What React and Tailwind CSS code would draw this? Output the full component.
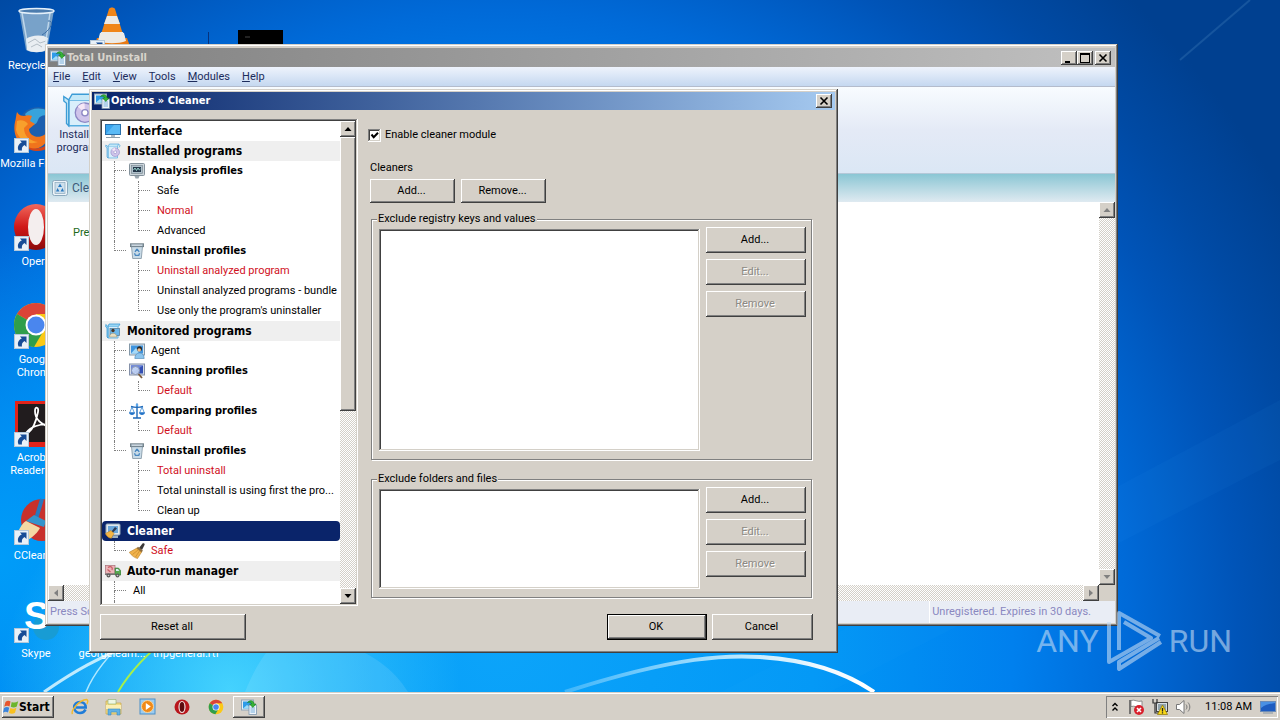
import React, { useState } from 'react';
import clsx from 'clsx';

const RAISED = 'bg-[#d5d0c8] shadow-[inset_-1px_-1px_#404040,inset_1px_1px_#fff,inset_-2px_-2px_#808080]';
const SUNKEN = 'shadow-[inset_-1px_-1px_#fff,inset_1px_1px_#808080,inset_-2px_-2px_#d4d0c8,inset_2px_2px_#404040]';
const WINDOW = 'bg-[#d5d0c8] shadow-[inset_-1px_-1px_#404040,inset_1px_1px_#d4d0c8,inset_-2px_-2px_#808080,inset_2px_2px_#fff]';
const TRACK = 'bg-[repeating-conic-gradient(#fff_0_25%,#d4d0c8_0_50%)] bg-[length:2px_2px]';
const BOLD = "font-bold font-['DejaVu_Sans_Condensed','DejaVu_Sans',sans-serif]";

/* ---------- icons ---------- */

function AppIcon({ className = 'size-4' }) {
  return (
    <svg viewBox="0 0 16 16" className={className}>
      <rect x="0.5" y="1" width="12" height="10" fill="#e8eef4" stroke="#8fa4b8" />
      <rect x="2" y="2.500" width="9" height="7" fill="#2f9be8" />
      <path d="M2 9.500 6 6l5 3.500z" fill="#9fdcf6" />
      <rect x="8" y="6" width="7.500" height="9.500" fill="#eef4fa" stroke="#7d95ad" strokeWidth=".8" />
      <path d="M9.500 9h4.500M9.500 11h4.500M9.500 13h4.500" stroke="#6aa7d8" strokeWidth=".9" />
      <path d="M6.500 3.500C9 .5 13 1.500 13 5h2l-3.200 3.500L8.700 5h1.800C10.500 3.300 8.500 2.800 6.500 3.500z" fill="#35b335" stroke="#157a1c" strokeWidth=".6" />
    </svg>
  );
}

function MonitorIcon() {
  return (
    <svg viewBox="0 0 16 16" className="size-4">
      <rect x="0" y="1" width="16" height="11" fill="#2b6fa8" />
      <rect x="1" y="2" width="14" height="9" fill="#38a4ee" />
      <path d="M1 11 9 2h6v9z" fill="#5abaf6" />
      <path d="M6 12h4v2H6z" fill="#aebcc6" />
      <path d="M1 14.500h14" stroke="#8fa0ac" />
    </svg>
  );
}

function BoxIcon({ className = 'size-4' }) {
  return (
    <svg viewBox="0 0 16 16" className={className}>
      <path d="M3 3.500h9.500V15H3z" fill="#d9effb" stroke="#56aee0" strokeWidth=".7" />
      <path d="M.8 2 3 3.500V15l-1-1V5L.8 4zM3 3.500 4.500 1h9l-1 2.500M13.500 1l1.700 1.500-1.200 2" fill="#c4e8f8" stroke="#3c9cd6" strokeWidth=".6" />
      <circle cx="10.200" cy="9.200" r="4.300" fill="#cfc4ea" stroke="#8d88c4" strokeWidth=".6" />
      <path d="M10.200 9.200 7 6.500a4 4 0 0 1 3-1.500z" fill="#f6e7f6" />
      <circle cx="10.200" cy="9.200" r="1.400" fill="#fff" stroke="#8d88c4" strokeWidth=".6" />
    </svg>
  );
}

function BoxMonitorIcon() {
  return (
    <svg viewBox="0 0 16 16" className="size-4">
      <path d="M3 3.500h10V15H3z" fill="#d9effb" stroke="#56aee0" strokeWidth=".9" />
      <path d="M.8 1.500 3 3.500V15l-1-1V5L.8 4zM3 3.500 4 1h11l-1.500 2.500" fill="#9bd6f4" stroke="#3c9cd6" strokeWidth=".8" />
      <rect x="5" y="5.500" width="9.500" height="7" fill="#6cb7ea" stroke="#5d7f99" strokeWidth=".8" />
      <circle cx="8" cy="7.500" r="1.700" fill="#4b3524" />
      <path d="M4.500 14c0-5 7-5 7.500 0z" fill="#eadfc0" stroke="#8c8768" strokeWidth=".5" />
    </svg>
  );
}

function AnalysisIcon() {
  return (
    <svg viewBox="0 0 16 16" className="size-4">
      <rect x=".5" y=".5" width="15" height="12" rx="1" fill="#cdd6dc" stroke="#83919b" />
      <rect x="2.500" y="2.500" width="11" height="8" fill="#aebfca" stroke="#74828c" strokeWidth=".6" />
      <rect x="4" y="4" width="8" height="5" fill="#26384a" />
      <path d="M4.500 7 6 5l1.500 2.500L9 5l1.300 2 1.200-1" fill="none" stroke="#9ee0d8" strokeWidth=".9" />
      <path d="M5.500 13h5l-1 2.500h-3z" fill="#98a4ad" />
    </svg>
  );
}

function BinIcon() {
  return (
    <svg viewBox="0 0 16 16" className="size-4">
      <path d="M2.500 3.500h11L12.300 15.500H3.700z" fill="#c9dbe7" stroke="#7f93a2" strokeWidth=".8" />
      <rect x="1.400" y=".8" width="13.200" height="2.900" fill="#9fb0bc" stroke="#66767f" strokeWidth=".8" />
      <path d="M3 2.200h10" stroke="#e5eef4" strokeWidth=".9" />
      <path d="M8 6 6 8.800M8 6l2.200 2.800M5.500 10.300l.9 2h3.400l.8-2" fill="none" stroke="#4a88c0" strokeWidth="1.300" />
    </svg>
  );
}

function AgentIcon() {
  return (
    <svg viewBox="0 0 16 16" className="size-4">
      <rect x=".5" y="1" width="15" height="11" fill="#d9e3ea" stroke="#8498a8" />
      <rect x="2" y="2.500" width="12" height="8" fill="#3f94de" />
      <path d="M2 10.500 7 5l3 5.500z" fill="#a5daf8" />
      <circle cx="10.500" cy="5.800" r="2.500" fill="#2a2724" />
      <circle cx="10.200" cy="7" r="1.800" fill="#efbd8c" />
      <path d="M5.800 15.500c0-7.500 9.400-7.500 9.400 0z" fill="#8cc5ee" stroke="#4c86b6" strokeWidth=".6" />
    </svg>
  );
}

function ScanIcon() {
  return (
    <svg viewBox="0 0 16 16" className="size-4">
      <rect x=".5" y="1" width="15" height="11" fill="#d5dce8" stroke="#8490a8" />
      <rect x="2" y="2.500" width="12" height="8" fill="#3450b4" />
      <path d="M2 10.500v-8h12z" fill="#6b86dc" />
      <circle cx="6.500" cy="7.500" r="4" fill="#cfdffa" fillOpacity=".85" stroke="#8895ae" />
      <path d="m9.500 11 3.500 4" stroke="#7a5b3a" strokeWidth="1.800" />
    </svg>
  );
}

function ScalesIcon() {
  return (
    <svg viewBox="0 0 16 16" className="size-4">
      <path d="M8 .5v14M4 15h8M2 3.500c3 1 9 1 12 0" fill="none" stroke="#1d68b8" strokeWidth="1.400" />
      <path d="M3 4 .8 9.500M3 4l2.200 5.500M13 4l-2.200 5.500M13 4l2.200 5.500" stroke="#3c8ad4" strokeWidth=".8" />
      <path d="M0 9.300h6c0 3.500-6 3.500-6 0zM10 9.300h6c0 3.500-6 3.500-6 0z" fill="#2474c8" />
      <circle cx="8" cy="2" r="1.300" fill="#5aa6ea" />
    </svg>
  );
}

function CleanerIcon() {
  return (
    <svg viewBox="0 0 16 16" className="size-4">
      <rect x="1" y="1" width="14" height="11" rx="1" fill="#dfe8ef" stroke="#93a8b8" />
      <rect x="3" y="3" width="10" height="7" fill="#6aa6da" />
      <path d="m6 9 4-5 2 1.500-4 4z" fill="#2c3b54" />
      <path d="M.5 10.500 6 7.500l3 3-2.500 4.800c-2.500 0-4.500-1.500-6-4.800z" fill="#f3b545" stroke="#b67c1c" strokeWidth=".5" />
      <path d="M7 15h6v-2.500H8" fill="#9fb2c0" />
    </svg>
  );
}

function BroomIcon() {
  return (
    <svg viewBox="0 0 16 16" className="size-4">
      <path d="m10 5 3.500-4.500c1.500-.7 2.500.5 2 1.500L13 7z" fill="#3c3a38" />
      <path d="m9 3.800 5 4-1.800 1.700-5-3.800z" fill="#8b6b3e" />
      <path d="M7.500 5.300 12.500 9.200 8.500 15.500C5.500 14.700 2.500 12.700.3 9.300z" fill="#f0b24c" stroke="#b67e24" strokeWidth=".6" />
      <path d="m9 7-5.500 4.500M10.500 8l-4 6" stroke="#c98a2a" strokeWidth=".7" />
    </svg>
  );
}

function TruckIcon() {
  return (
    <svg viewBox="0 0 16 16" className="size-4">
      <rect x=".5" y="2.500" width="9.500" height="8" fill="#eab4b8" stroke="#a86f78" strokeWidth=".7" />
      <path d="M3 4.500c3-2 5 0 4 2.500M2.500 6.500l3 2.500" fill="none" stroke="#c85a62" strokeWidth="1.200" />
      <path d="M10 5h3.500L16 8v4h-6z" fill="#58a850" stroke="#37713a" strokeWidth=".6" />
      <path d="M11 6h2l1.300 2H11z" fill="#d4ecf4" />
      <path d="M0 10.500h10V12H0z" fill="#777" />
      <circle cx="3.500" cy="12.500" r="2" fill="#5a5a5a" />
      <circle cx="12.500" cy="12.500" r="2" fill="#5a5a5a" />
      <circle cx="3.500" cy="12.500" r=".8" fill="#ccc" />
      <circle cx="12.500" cy="12.500" r=".8" fill="#ccc" />
    </svg>
  );
}

function ChromeIcon({ className }) {
  return (
    <svg viewBox="0 0 48 48" className={className}>
      <circle cx="24" cy="24" r="22" fill="#fbc916" />
      <path d="M24 24 5 13A22 22 0 0 1 43 13H24z" fill="#db4437" />
      <path d="M24 24 5 13a22 22 0 0 0 17 33l10-17z" fill="#2f9e4c" />
      <circle cx="24" cy="24" r="10.500" fill="#fff" />
      <circle cx="24" cy="24" r="8.500" fill="#4a86ee" />
    </svg>
  );
}

function OperaIcon({ className }) {
  return (
    <svg viewBox="0 0 48 48" className={className}>
      <defs>
        <linearGradient id="opera" x1="0" y1="0" x2="0" y2="1">
          <stop offset="0" stopColor="#f0685c" />
          <stop offset=".5" stopColor="#d01818" />
          <stop offset="1" stopColor="#8c0a0a" />
        </linearGradient>
      </defs>
      <ellipse cx="24" cy="24" rx="22" ry="23" fill="url(#opera)" />
      <ellipse cx="24" cy="24" rx="8" ry="18" fill="#f4eeee" />
    </svg>
  );
}

function RecycleBinIcon() {
  return (
    <svg viewBox="0 0 48 48" className="size-12">
      <path d="M7 3 14 43c5 3 17 3 21 0l7-40z" fill="#8db0ce" fillOpacity=".85" />
      <path d="M14 32c5-4 16-5 22-1l-2 12c-5 3-14 3-19 0z" fill="#e9eef2" />
      <path d="m16 36 7-4 5 4 6-2M19 40l6-3 5 3" stroke="#b4bec6" fill="none" />
      <path d="m10 6 6 34M38 6l-5 34" stroke="#dcecf8" strokeOpacity=".7" strokeWidth="1.500" />
      <path d="M36 14c6-1 4 8-6 14" stroke="#3b6ea6" fill="none" />
      <ellipse cx="24.500" cy="4" rx="17.500" ry="2.500" fill="#4c7cae" stroke="#e4f0fa" strokeWidth="1.500" />
    </svg>
  );
}

function FirefoxIcon() {
  return (
    <svg viewBox="0 0 48 48" className="size-12">
      <circle cx="26" cy="22" r="20" fill="#1c5fae" />
      <path d="M13 9C20 1 37 1 44 14c-8-5-16-5-18 1s-6 5-9 2z" fill="#38a3dc" />
      <path d="M5 7c2 3 4 4 7 4 3-1 6-1 8 0l-2 5 5 3-6 5c0 7 9 10 15 6l6-4c-1 12-10 19-18 18C8 43 0 31 3 17c1-3 1-7 2-10z" fill="#f0741c" />
      <path d="M5 16c4-2 9 0 11 3l-4 4c0 8 6 13 14 14-10 4-20-3-22-12z" fill="#f8a02c" />
      <path d="M12 40c8 6 22 5 31-8-2 9-9 14-17 14-6 0-11-2-14-6z" fill="#d4451a" />
    </svg>
  );
}

function AcrobatIcon() {
  return (
    <svg viewBox="0 0 48 48" className="size-12">
      <rect x="3" y="2" width="45" height="46" fill="#e2231a" />
      <rect x="6" y="5" width="41" height="38" fill="#211c1e" />
      <path d="M14 34c4-6 14-10 26-8 5 1 4 4 0 3-10-3-17-9-17-17 0-5 4-4 3 1-2 10-6 18-10 21-3 2-4 1-2 0z" fill="none" stroke="#fff" strokeWidth="1.800" />
    </svg>
  );
}

function CCleanerIcon() {
  return (
    <svg viewBox="0 0 48 48" className="size-12">
      <circle cx="30" cy="23" r="21" fill="#c8312c" />
      <path d="M30 2 24 22" stroke="#2878be" strokeWidth="4" />
      <path d="m14 24 8-6 12 6-2 6z" fill="#3494cc" />
      <path d="M2 44c4-10 8-18 12-20l14 7c-3 6-12 14-20 14z" fill="#f4d9a4" />
    </svg>
  );
}

function SkypeIcon() {
  return (
    <svg viewBox="0 0 48 48" className="size-12">
      <circle cx="34" cy="32" r="13" fill="#189cd4" />
      <text x="12" y="34" fill="#fff" fontFamily="Liberation Sans, sans-serif" fontWeight="700" fontSize="38">S</text>
    </svg>
  );
}

function VlcIcon() {
  return (
    <svg viewBox="0 0 48 48" className="size-12">
      <path d="M21 2c1-2 5-2 6 0l12 38H9z" fill="#f08518" />
      <path d="M19 9h10l3 8H16zM13 25h22l3 9H10z" fill="#eceae6" />
      <path d="M9 31h30l5 14H4z" fill="#e87a14" />
      <path d="M12 26h24l2 8c-7 3-21 3-28 0z" fill="#eceae6" />
    </svg>
  );
}

function ShortcutArrow() {
  return (
    <svg viewBox="0 0 15 15" className="absolute left-[2px] bottom-0 size-[15px]">
      <rect x=".5" y=".5" width="14" height="14" fill="#e9f1f8" stroke="#b4c8da" />
      <path d="M6 2.500h6.500V9l-2-2C8 8.500 7.500 10.500 8 12.500H4.500C3 9 4.500 6 7.800 4.600z" fill="#174c96" />
    </svg>
  );
}

/* ---------- desktop ---------- */

function Wallpaper() {
  return (
    <svg viewBox="0 0 1280 692" preserveAspectRatio="none" className="absolute inset-0 size-full" aria-hidden="true">
      <defs>
        <radialGradient id="sky" gradientUnits="userSpaceOnUse" cx="500" cy="640" r="900">
          <stop offset="0" stopColor="#0ca4fa" />
          <stop offset=".35" stopColor="#0298f6" />
          <stop offset=".57" stopColor="#0080ee" />
          <stop offset=".7" stopColor="#006ad8" />
          <stop offset=".82" stopColor="#0054b8" />
          <stop offset=".9" stopColor="#004aa4" />
          <stop offset="1" stopColor="#004090" />
        </radialGradient>
        <radialGradient id="left" gradientUnits="userSpaceOnUse" cx="0" cy="560" r="320">
          <stop offset="0" stopColor="#009cf8" />
          <stop offset="1" stopColor="#009cf8" stopOpacity="0" />
        </radialGradient>
        <radialGradient id="glow" gradientUnits="userSpaceOnUse" cx="230" cy="690" r="230">
          <stop offset="0" stopColor="#50dcff" stopOpacity=".85" />
          <stop offset="1" stopColor="#50dcff" stopOpacity="0" />
        </radialGradient>
        <linearGradient id="arc" x1="0" x2="1">
          <stop offset="0" stopColor="#bfeaff" stopOpacity=".3" />
          <stop offset=".5" stopColor="#d8f4ff" stopOpacity=".8" />
          <stop offset=".85" stopColor="#fff" />
        </linearGradient>
      </defs>
      <rect width="1280" height="692" fill="url(#sky)" />
      <rect width="400" height="692" fill="url(#left)" />
      <rect width="480" height="240" y="452" fill="url(#glow)" />
      <path d="M245 692C270 630 300 620 330 640c40 10 65 30 78 52z" fill="#fff" fillOpacity=".1" />
      <path d="M44 692C70 674 100 655 150 638" fill="none" stroke="#e8fbff" strokeWidth="3" strokeOpacity=".8" />
      <path d="M86 692C94 672 108 655 130 636" fill="none" stroke="#d4f6ff" strokeWidth="1.500" strokeOpacity=".8" />
      <path d="M118 692C128 675 145 655 170 636" fill="none" stroke="#a6f04a" strokeWidth="2" />
      <path d="M565 692C680 655 730 655 760 657 810 660 845 672 874 692" fill="none" stroke="url(#arc)" strokeWidth="4" />
      <path d="M720 692 980 560 1280 400v60L830 692z" fill="#3ba8ff" fillOpacity=".05" />
      <path d="M1180 60 1250 0" stroke="#6ea8d8" strokeOpacity=".2" strokeWidth="2" />
      <path d="M208 32h1v14h-1z" fill="#06327c" />
      <rect x="238" y="30" width="45" height="20" fill="#000" />
      <path d="M245 37h5" stroke="#444" />
    </svg>
  );
}

function DesktopItem({ label, icon, shortcut = true, className }) {
  return (
    <div className={clsx('absolute w-[72px] flex flex-col items-center text-white text-center', className)}>
      <div className="relative size-12">
        {icon}
        {icon && shortcut && <ShortcutArrow />}
      </div>
      <span className="mt-1 leading-[13px]">{label}</span>
    </div>
  );
}

/* ---------- window chrome ---------- */

function CaptionButton({ label, children }) {
  return (
    <button type="button" aria-label={label} className={clsx(RAISED, 'w-4 h-[14px] flex items-center justify-center')}>
      <svg viewBox="0 0 10 10" className="size-[10px]" shapeRendering="crispEdges">{children}</svg>
    </button>
  );
}

const CROSS = <path d="M1.500 1.500l7 7M8.500 1.500l-7 7" stroke="#000" strokeWidth="1.600" shapeRendering="auto" />;

const ARROWS = {
  up: 'M4 2 7.500 6H.5z',
  down: 'M.5 2h7L4 6z',
  left: 'M2 4 6 .5v7z',
  right: 'M6 4 2 .5v7z',
};

function ScrollButton({ dir, muted }) {
  return (
    <button type="button" aria-label={`Scroll ${dir}`} className={clsx(RAISED, 'size-4 shrink-0 flex items-center justify-center')}>
      <svg viewBox="0 0 8 8" className="size-2">
        <path d={ARROWS[dir]} fill={muted ? '#808080' : '#000'} />
      </svg>
    </button>
  );
}

function Button({ children, className, disabled, primary }) {
  return (
    <button
      type="button"
      disabled={disabled}
      className={clsx(
        RAISED,
        'text-center pr-[2px] disabled:text-[#8c8984] disabled:[text-shadow:1px_1px_#fff]',
        primary && 'border border-black',
        className
      )}
    >
      {children}
    </button>
  );
}

/* ---------- options tree ---------- */

// guides: one entry per indent level
const TREE = [
  { kind: 'root', label: 'Interface', icon: MonitorIcon, plain: true },
  { kind: 'root', label: 'Installed programs', icon: BoxIcon },
  { kind: 'group', label: 'Analysis profiles', icon: AnalysisIcon, guides: ['tee'] },
  { label: 'Safe', guides: ['bar', 'tee'] },
  { label: 'Normal', guides: ['bar', 'tee'], red: true },
  { label: 'Advanced', guides: ['bar', 'end'] },
  { kind: 'group', label: 'Uninstall profiles', icon: BinIcon, guides: ['end'] },
  { label: 'Uninstall analyzed program', guides: ['gap', 'tee'], red: true },
  { label: 'Uninstall analyzed programs - bundle', guides: ['gap', 'tee'] },
  { label: "Use only the program's uninstaller", guides: ['gap', 'end'] },
  { kind: 'root', label: 'Monitored programs', icon: BoxMonitorIcon },
  { label: 'Agent', icon: AgentIcon, guides: ['tee'] },
  { kind: 'group', label: 'Scanning profiles', icon: ScanIcon, guides: ['tee'] },
  { label: 'Default', guides: ['bar', 'end'], red: true },
  { kind: 'group', label: 'Comparing profiles', icon: ScalesIcon, guides: ['tee'] },
  { label: 'Default', guides: ['bar', 'end'], red: true },
  { kind: 'group', label: 'Uninstall profiles', icon: BinIcon, guides: ['end'] },
  { label: 'Total uninstall', guides: ['gap', 'tee'], red: true },
  { label: 'Total uninstall is using first the pro...', guides: ['gap', 'tee'] },
  { label: 'Clean up', guides: ['gap', 'end'] },
  { kind: 'root', label: 'Cleaner', icon: CleanerIcon, selected: true },
  { label: 'Safe', icon: BroomIcon, guides: ['end'], red: true },
  { kind: 'root', label: 'Auto-run manager', icon: TruckIcon },
  { label: 'All', guides: ['tee'] },
  { label: '', guides: ['bar'] },
];

function Guide({ type }) {
  return (
    <div className="w-6 h-5 pl-3 shrink-0">
      {type !== 'gap' && (
        <>
          <div className={clsx('h-[10px] border-l border-dotted border-[#808080]', type !== 'bar' && 'border-b')} />
          {type !== 'end' && <div className="h-[10px] border-l border-dotted border-[#808080]" />}
        </>
      )}
    </div>
  );
}

function TreeRow({ kind, label, icon: Icon, guides = [], red, selected, plain }) {
  return (
    <li
      className={clsx(
        'h-5 flex items-center whitespace-nowrap',
        kind && BOLD,
        kind === 'root' && 'text-xs',
        kind === 'root' && !plain && !selected && 'bg-[#efefef]',
        selected && 'bg-[#0a246a] text-white rounded-sm',
        red && 'text-[#d0101c]'
      )}
    >
      {guides.map((type, i) => (
        <Guide key={i} type={type} />
      ))}
      {Icon && (
        <span className="pl-[3px] shrink-0">
          <Icon />
        </span>
      )}
      <span className={Icon ? 'pl-[6px]' : 'pl-[7px]'}>{label}</span>
    </li>
  );
}

function OptionsTree() {
  return (
    <div className={clsx('w-[258px] h-[487px] p-[2px] bg-white flex shrink-0', SUNKEN)}>
      <ul className="flex-1 min-w-0 overflow-hidden">
        {TREE.map((node, i) => (
          <TreeRow key={i} {...node} />
        ))}
      </ul>
      <div className={clsx('w-4 flex flex-col', TRACK)}>
        <ScrollButton dir="up" />
        <div className={clsx('h-[274px]', RAISED)} />
        <div className="flex-1" />
        <ScrollButton dir="down" />
      </div>
    </div>
  );
}

function ExcludeGroup({ title, listClass, className }) {
  return (
    <fieldset className={clsx('ml-[3px] mr-px border border-[#808080] shadow-[1px_1px_#fff,inset_1px_1px_#fff] pl-[7px] pr-[5px] pb-2', className)}>
      <legend className="-ml-[2px] px-px h-[14px] leading-[14px] bg-[#d5d0c8]">{title}</legend>
      <div className="flex gap-[6px]">
        <select multiple aria-label={title} className={clsx('mt-[3px] flex-1 min-w-0 appearance-none bg-white', SUNKEN, listClass)} />
        <div className="w-[100px] pt-px flex flex-col gap-[6px]">
          <Button className="h-[26px]">Add...</Button>
          <Button className="h-[26px]" disabled>Edit...</Button>
          <Button className="h-[26px]" disabled>Remove</Button>
        </div>
      </div>
    </fieldset>
  );
}

function OptionsDialog() {
  const [enabled, setEnabled] = useState(true);

  return (
    <section className={clsx('absolute left-[89px] top-[89px] w-[749px] p-[3px] text-black', WINDOW)}>
      <div className="h-[18px] flex items-center pl-[2px] pr-[3px] bg-gradient-to-r from-[#0a246a] to-[#a6caf0] text-white">
        <AppIcon />
        <h2 className={clsx('ml-px flex-1', BOLD)}>Options » Cleaner</h2>
        <CaptionButton label="Close">{CROSS}</CaptionButton>
      </div>
      <div className="pt-[9px] pl-2 pr-[22px] pb-[10px]">
        <div className="flex gap-[10px]">
          <OptionsTree />
          <div className="flex-1 min-w-0 pt-[9px]">
            <label className="flex items-center h-[14px]">
              <span className="relative size-[13px]">
                <input
                  type="checkbox"
                  checked={enabled}
                  onChange={(e) => setEnabled(e.target.checked)}
                  className={clsx('block size-[13px] appearance-none bg-white', SUNKEN)}
                />
                {enabled && (
                  <svg viewBox="0 0 13 13" className="absolute inset-0 pointer-events-none">
                    <path d="M3.500 5.500 5.700 8.200 10 3.700" fill="none" stroke="#000" strokeWidth="2" />
                  </svg>
                )}
              </span>
              <span className="ml-1">Enable cleaner module</span>
            </label>
            <div className="mt-[19px] ml-[2px]">
              <div className="h-[14px] leading-[14px]">Cleaners</div>
              <div className="mt-1 flex gap-[6px]">
                <Button className="w-[85px] h-6">Add...</Button>
                <Button className="w-[85px] h-6">Remove...</Button>
              </div>
            </div>
            <ExcludeGroup title="Exclude registry keys and values" className="mt-[9px]" listClass="h-[222px]" />
            <ExcludeGroup title="Exclude folders and files" className="mt-3" listClass="h-[100px]" />
          </div>
        </div>
        <div className="mt-2 flex h-[26px]">
          <Button className="w-[146px]">Reset all</Button>
          <Button className="ml-auto w-[100px]" primary>OK</Button>
          <Button className="ml-[5px] w-[101px]">Cancel</Button>
        </div>
      </div>
    </section>
  );
}

/* ---------- main window ---------- */

const MENU = ['File', 'Edit', 'View', 'Tools', 'Modules', 'Help'];

function MainWindow() {
  return (
    <section className={clsx('absolute left-[45px] right-[162px] top-11 bottom-[66px] p-[3px] pt-1 flex flex-col', WINDOW)}>
      <div className="h-[19px] shrink-0 flex items-center pl-[2px] pr-1 bg-gradient-to-r from-[#808080] to-[#c0c0c0] text-[#d8d4cc]">
        <AppIcon />
        <h1 className={clsx('ml-px flex-1', BOLD)}>Total Uninstall</h1>
        <div className="flex">
          <CaptionButton label="Minimize"><path d="M1 8h5v2H1z" /></CaptionButton>
          <CaptionButton label="Maximize"><path d="M0 0h10v10H0zM1 2v7h8V2z" fillRule="evenodd" /></CaptionButton>
          <span className="w-[2px]" />
          <CaptionButton label="Close">{CROSS}</CaptionButton>
        </div>
      </div>
      <nav className="h-5 shrink-0 flex items-center gap-3 px-[5px] bg-gradient-to-b from-[#eef3fc] to-[#c5d8f0] border-b border-[#b4bccc] text-[#1c2c5c]">
        {MENU.map((item) => (
          <button key={item} type="button">
            <u>{item[0]}</u>
            {item.slice(1)}
          </button>
        ))}
      </nav>
      <div className="h-[87px] shrink-0 flex px-2 pt-[5px] bg-gradient-to-b from-[#f8fcff] via-[#e4eaf6] to-[#dbe7f5] border-b border-[#b4c8d8] text-[#1c2c5c]">
        <button type="button" className="w-12 flex flex-col items-center leading-[13px]">
          <BoxIcon className="size-9" />
          Installed programs
        </button>
      </div>
      <div className="h-7 shrink-0 flex items-center gap-1 pl-1 bg-gradient-to-b from-[#8ac6d4] to-[#dfeaf1] text-[#3c5a78]">
        <svg viewBox="0 0 16 16" className="size-4">
          <rect x=".5" y=".5" width="15" height="15" rx="2" fill="#edf4f9" stroke="#8ba9bd" />
          <rect x="3" y="2.500" width="10" height="11" fill="#cfe0ec" stroke="#8ba9bd" strokeWidth=".7" />
          <path d="M8 3.500 6 7h4zM4 11.500l1.500-3.500 2 3.500zM8.500 11.500l2-3.500 1.500 3.500z" fill="#2c7bc0" />
        </svg>
        <span className="text-xs">Cleaner</span>
      </div>
      <div className="flex-1 min-h-0 flex bg-white">
        <div className="flex-1 pl-[25px] pt-6 text-[#1c6a1c]">Press Scan</div>
        <div className={clsx('w-4 flex flex-col justify-between', TRACK)}>
          <ScrollButton dir="up" muted />
          <ScrollButton dir="down" muted />
        </div>
      </div>
      <div className="shrink-0 flex">
        <div className={clsx('h-4 flex-1 flex justify-between', TRACK)}>
          <ScrollButton dir="left" muted />
          <ScrollButton dir="right" muted />
        </div>
        <div className="w-4" />
      </div>
      <footer className="h-[22px] shrink-0 flex items-center justify-between pl-[2px] bg-[#e9edf5] text-[#8a88c0]">
        <span>Press Scan</span>
        <span className="h-full flex items-center border-l border-white pl-[2px] pr-6">Unregistered. Expires in 30 days.</span>
      </footer>
    </section>
  );
}

function Watermark() {
  return (
    <div className="absolute right-12 bottom-[18px] flex items-center gap-[6px] text-[#c4dcf4] opacity-60 text-[32px] leading-none font-['Roboto',sans-serif]">
      <span>ANY</span>
      <svg viewBox="0 0 58 66" className="w-[58px] h-[66px]" fill="none" stroke="currentColor" strokeWidth="4" strokeLinejoin="round">
        <path d="M14 42V5L55 28M4 14V54L46 30 19 14M56 34 14 61V54L54 30" />
      </svg>
      <span>RUN</span>
    </div>
  );
}

/* ---------- taskbar ---------- */

function TaskIcon({ label, children }) {
  return (
    <button type="button" aria-label={label} className="size-[18px] flex items-center justify-center">
      {children}
    </button>
  );
}

function Taskbar() {
  return (
    <div className="relative h-7 shrink-0 flex items-center bg-[#d5d0c8] border-t border-[#d5d0c8] shadow-[inset_0_1px_#fff] pl-[2px] pt-px text-black">
      <button type="button" className={clsx('h-[22px] w-[52px] flex items-center pl-px text-xs', BOLD, RAISED)}>
        <svg viewBox="0 0 16 16" className="size-4">
          <path d="M2.500 3C4 1.500 6 1.500 7.500 2.500L6.500 7.500C5 6.500 3 6.500 1.200 7.800z" fill="#e8542c" />
          <path d="M8.700 3c2 1 4 .8 6.500-.7l-1.400 5.200c-2 1.200-4 1.200-6 .3z" fill="#6cb52c" />
          <path d="M1 9c2-1.300 3.700-1.200 5.200-.2L5 13.600c-1.500-1-3.300-1-5 .2z" fill="#3a84dc" />
          <path d="M7.400 9c2 1 4 .9 6-.2L12 13.700c-2 1.300-4 1.200-6 .3z" fill="#f8c020" />
        </svg>
        Start
      </button>
      <div className="ml-[17px] flex items-center gap-4">
        <TaskIcon label="Internet Explorer">
          <svg viewBox="0 0 18 18" className="size-[18px]" fill="none">
            <path d="M14.500 11.500c-1 2.300-3 3.500-5.500 3.500-3.500 0-5.800-2.400-5.800-5.600S5.700 4 9 4s5.700 2.300 5.700 5.500H5" stroke="#1f7cd8" strokeWidth="2.600" />
            <path d="M1.500 16C-.5 13 8 2 15.500 1.500c2 .2 1.300 3 .3 4.500" stroke="#f2b92c" strokeWidth="1.400" />
          </svg>
        </TaskIcon>
        <TaskIcon label="Windows Explorer">
          <svg viewBox="0 0 18 18" className="size-[18px]">
            <path d="M1 3h6l1.500 2H16v11H1z" fill="#f3dc84" stroke="#c8a648" strokeWidth=".7" />
            <path d="M3 1.500h8V6H3z" fill="#eef6e4" stroke="#8fb069" strokeWidth=".6" />
            <path d="M1 7h15v4H1z" fill="#fbefb4" />
            <path d="M3 17v-6h12v6h-3v-3H6v3z" fill="#62b2e4" stroke="#3b88c0" strokeWidth=".6" />
          </svg>
        </TaskIcon>
        <TaskIcon label="Media Player">
          <svg viewBox="0 0 18 18" className="size-[18px]">
            <rect x="1" y="1" width="15" height="15" fill="#9cccf0" stroke="#4c90c8" />
            <circle cx="8.500" cy="8.500" r="6" fill="#f08a18" stroke="#fbd59a" />
            <path d="M6.800 5v7l5-3.500z" fill="#fff" />
          </svg>
        </TaskIcon>
        <TaskIcon label="Opera">
          <svg viewBox="0 0 16 16" className="size-4">
            <circle cx="8" cy="8" r="7.500" fill="#b8161c" />
            <ellipse cx="8" cy="8" rx="3" ry="5.500" fill="#5c0a0e" stroke="#f2dede" strokeWidth="1.200" />
          </svg>
        </TaskIcon>
        <TaskIcon label="Chrome"><ChromeIcon className="size-4" /></TaskIcon>
      </div>
      <button
        type="button"
        aria-label="Total Uninstall"
        className={clsx('ml-2 w-8 h-[22px] flex items-center justify-center', RAISED)}
      >
        <AppIcon />
      </button>
      <div className="ml-auto mr-[2px] h-[22px] flex items-center pl-[5px] pr-[2px] shadow-[inset_1px_1px_#808080,inset_-1px_-1px_#fff]">
        <button type="button" aria-label="Show hidden icons">
          <svg viewBox="0 0 8 10" className="w-2 h-[10px]" fill="none" stroke="#000" strokeWidth="1.400">
            <path d="M1.500 4 4 1.500 6.500 4M1.500 8.500 4 6l2.500 2.500" />
          </svg>
        </button>
        <svg viewBox="0 0 18 18" className="ml-2 size-[18px]">
          <path d="M3 2v14" stroke="#555" strokeWidth="1.500" />
          <path d="M4 2.500c4-1.500 6 2 11 .5v6c-5 1.500-7-2-11-.5z" fill="#fff" stroke="#777" strokeWidth=".8" />
          <circle cx="12" cy="12" r="5" fill="#d8202c" />
          <path d="m10 10 4 4M14 10l-4 4" stroke="#fff" strokeWidth="1.600" />
        </svg>
        <svg viewBox="0 0 18 18" className="ml-[6px] size-[18px]">
          <rect x="5.500" y="4.500" width="11" height="9" fill="#d8e0e4" stroke="#444" />
          <rect x="7" y="6" width="8" height="6" fill="#93a4ac" />
          <path d="M2 1v4h4V1M4 5v10h5" fill="none" stroke="#333" strokeWidth="1.200" />
          <path d="m11.500 7 5 9.500h-10z" fill="#f8d818" stroke="#8c7400" strokeWidth=".7" />
          <path d="M11.500 10v3.500M11.500 14.300v1.200" stroke="#222" strokeWidth="1.300" />
        </svg>
        <svg viewBox="0 0 18 18" className="ml-[6px] size-[18px]" fill="none" stroke="#777">
          <path d="M1.500 6.500h3L9 2.500v13l-4.500-4h-3z" fill="#fff" />
          <path d="M11 6.500c1.300 1.500 1.300 3.500 0 5M13 4.500c2.400 2.700 2.400 6.300 0 9" />
        </svg>
        <span className="ml-3">11:08 AM</span>
        <svg viewBox="0 0 16 14" className="ml-2 w-4 h-[14px]">
          <rect x=".5" y="1.500" width="15" height="10" fill="#1e5cc0" stroke="#6c8cb8" />
          <path d="M1 8c5-4 9-4 14-5V2H1z" fill="#4a90e4" />
          <path d="M3 13h10" stroke="#8494a4" />
        </svg>
      </div>
    </div>
  );
}

export default function App() {
  return (
    <div className="h-screen flex flex-col overflow-hidden cursor-default text-[11px] leading-[14px] font-['Roboto','DejaVu_Sans_Condensed',sans-serif]">
      <main className="relative flex-1 min-h-0 overflow-hidden">
        <Wallpaper />
        <DesktopItem className="left-0 top-[7px]" label="Recycle Bin" icon={<RecycleBinIcon />} shortcut={false} />
        <DesktopItem className="left-0 top-[105px] whitespace-nowrap" label="Mozilla Firefox" icon={<FirefoxIcon />} />
        <DesktopItem className="left-0 top-[203px]" label="Opera" icon={<OperaIcon className="size-12" />} />
        <DesktopItem className="left-0 top-[301px]" label="Google Chrome" icon={<ChromeIcon className="size-12" />} />
        <DesktopItem className="left-0 top-[399px] whitespace-pre-line" label={'Acrobat\nReader DC'} icon={<AcrobatIcon />} />
        <DesktopItem className="left-0 top-[497px]" label="CCleaner" icon={<CCleanerIcon />} />
        <DesktopItem className="left-0 top-[595px]" label="Skype" icon={<SkypeIcon />} />
        <DesktopItem className="left-[76px] top-[7px]" label="" icon={<VlcIcon />} />
        <DesktopItem className="left-[76px] top-[595px]" label="georgelearn..." />
        <DesktopItem className="left-[150px] top-[595px]" label="tripgeneral.rtf" />
        <MainWindow />
        <OptionsDialog />
        <Watermark />
      </main>
      <Taskbar />
    </div>
  );
}
